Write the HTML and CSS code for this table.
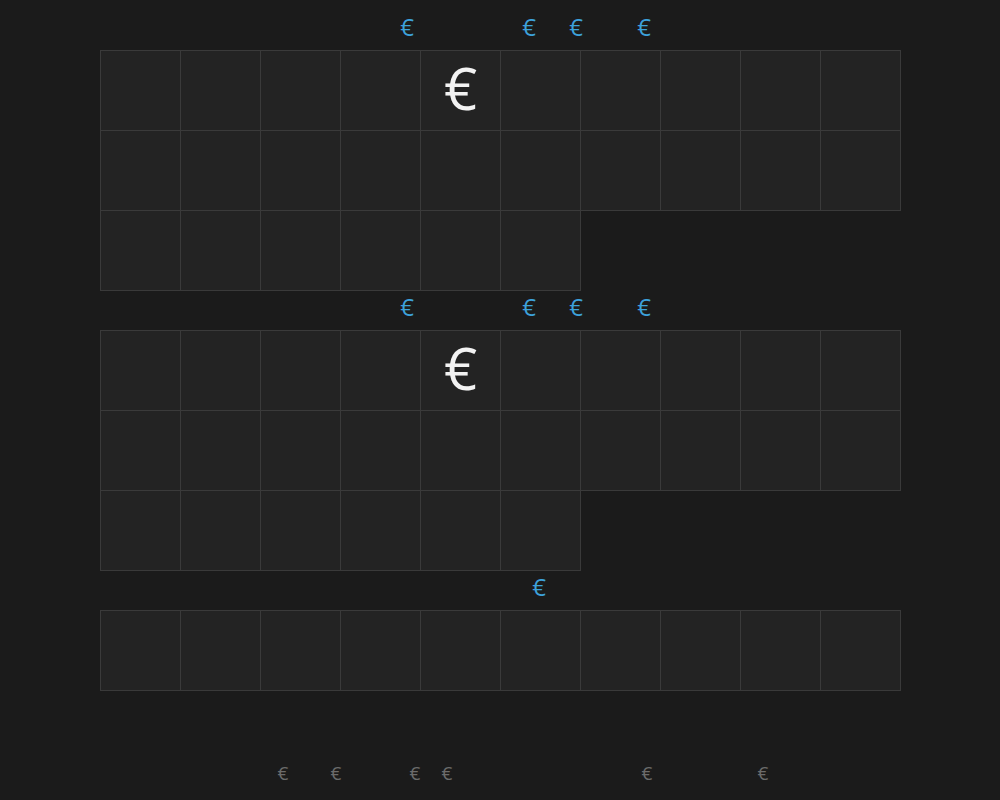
FILE: index.html
```html
<!DOCTYPE html>
<html>
<head>
<meta charset="utf-8">
<link rel="stylesheet" href="styles.css">
</head>
<body>
<div class="page">
  <div class="strip">
    <span class="mark" style="left:307px">€</span>
    <span class="mark" style="left:429px">€</span>
    <span class="mark" style="left:476px">€</span>
    <span class="mark" style="left:544px">€</span>
  </div>
  <div class="grid">
    <div class="cell"></div><div class="cell"></div><div class="cell"></div><div class="cell"></div><div class="cell"><span class="big">€</span></div>
    <div class="cell"></div><div class="cell"></div><div class="cell"></div><div class="cell"></div><div class="cell"></div>
    <div class="cell"></div><div class="cell"></div><div class="cell"></div><div class="cell"></div><div class="cell"></div>
    <div class="cell"></div><div class="cell"></div><div class="cell"></div><div class="cell"></div><div class="cell"></div>
    <div class="cell"></div><div class="cell"></div><div class="cell"></div><div class="cell"></div><div class="cell"></div>
    <div class="cell"></div>
  </div>
  <div class="strip">
    <span class="mark" style="left:307px">€</span>
    <span class="mark" style="left:429px">€</span>
    <span class="mark" style="left:476px">€</span>
    <span class="mark" style="left:544px">€</span>
  </div>
  <div class="grid">
    <div class="cell"></div><div class="cell"></div><div class="cell"></div><div class="cell"></div><div class="cell"><span class="big">€</span></div>
    <div class="cell"></div><div class="cell"></div><div class="cell"></div><div class="cell"></div><div class="cell"></div>
    <div class="cell"></div><div class="cell"></div><div class="cell"></div><div class="cell"></div><div class="cell"></div>
    <div class="cell"></div><div class="cell"></div><div class="cell"></div><div class="cell"></div><div class="cell"></div>
    <div class="cell"></div><div class="cell"></div><div class="cell"></div><div class="cell"></div><div class="cell"></div>
    <div class="cell"></div>
  </div>
  <div class="strip">
    <span class="mark" style="left:439px">€</span>
  </div>
  <div class="grid">
    <div class="cell"></div><div class="cell"></div><div class="cell"></div><div class="cell"></div><div class="cell"></div>
    <div class="cell"></div><div class="cell"></div><div class="cell"></div><div class="cell"></div><div class="cell"></div>
  </div>
  <div class="footer">
    <span class="gray" style="left:183px">€</span>
    <span class="gray" style="left:236px">€</span>
    <span class="gray" style="left:315px">€</span>
    <span class="gray" style="left:347px">€</span>
    <span class="gray" style="left:547px">€</span>
    <span class="gray" style="left:663px">€</span>
  </div>
</div>
</body>
</html>
```
FILE: styles.css
```css
html, body {
  margin: 0;
  padding: 0;
  background: #1b1b1b;
  font-family: "Open Sans", "Noto Sans", sans-serif;
}
.page {
  width: 800px;
  padding: 10px 100px 0;
}
.strip {
  position: relative;
  height: 40px;
}
.mark, .gray {
  position: absolute;
  top: 50%;
  transform: translate(-50%, -50%);
  margin-top: -3px;
  line-height: 1;
  color: #3da2da;
  font-size: 24px;
}
.grid {
  display: grid;
  grid-template-columns: repeat(10, 80px);
  grid-auto-rows: 80px;
}
.cell {
  box-sizing: border-box;
  width: 81px;
  height: 81px;
  background: #232323;
  border: 1px solid #3a3a3a;
  display: flex;
  align-items: center;
  justify-content: center;
}
.big {
  color: #f2f2f2;
  font-size: 58px;
  line-height: 1;
  margin-bottom: 6px;
}
.footer {
  position: relative;
  height: 110px;
}
.gray {
  top: 83px;
  margin-top: 0;
  color: #6b6b6b;
  font-size: 19px;
}
```
